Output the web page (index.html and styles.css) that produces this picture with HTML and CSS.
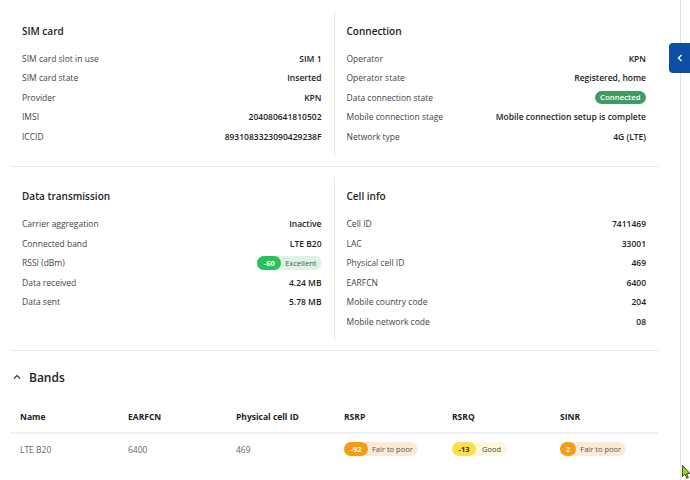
FILE: index.html
```html
<!DOCTYPE html>
<html>
<head>
<meta charset="utf-8">
<link rel="stylesheet" href="styles.css">
</head>
<body>
<div class="page">
  <main class="main">
    <section class="section">
      <div class="col">
        <h2 class="title">SIM card</h2>
        <div class="row"><span class="label">SIM card slot in use</span><span class="value">SIM 1</span></div>
        <div class="row"><span class="label">SIM card state</span><span class="value">Inserted</span></div>
        <div class="row"><span class="label">Provider</span><span class="value">KPN</span></div>
        <div class="row"><span class="label">IMSI</span><span class="value">204080641810502</span></div>
        <div class="row"><span class="label">ICCID</span><span class="value">8931083323090429238F</span></div>
      </div>
      <div class="col col-right">
        <h2 class="title">Connection</h2>
        <div class="row"><span class="label">Operator</span><span class="value">KPN</span></div>
        <div class="row"><span class="label">Operator state</span><span class="value">Registered, home</span></div>
        <div class="row"><span class="label">Data connection state</span><span class="status">Connected</span></div>
        <div class="row"><span class="label">Mobile connection stage</span><span class="value">Mobile connection setup is complete</span></div>
        <div class="row"><span class="label">Network type</span><span class="value">4G (LTE)</span></div>
      </div>
    </section>
    <section class="section section-2">
      <div class="col">
        <h2 class="title">Data transmission</h2>
        <div class="row"><span class="label">Carrier aggregation</span><span class="value">Inactive</span></div>
        <div class="row"><span class="label">Connected band</span><span class="value">LTE B20</span></div>
        <div class="row"><span class="label">RSSI (dBm)</span><span class="badge badge-green"><span class="num">-60</span><span class="txt">Excellent</span></span></div>
        <div class="row"><span class="label">Data received</span><span class="value">4.24 MB</span></div>
        <div class="row"><span class="label">Data sent</span><span class="value">5.78 MB</span></div>
      </div>
      <div class="col col-right">
        <h2 class="title">Cell info</h2>
        <div class="row"><span class="label">Cell ID</span><span class="value">7411469</span></div>
        <div class="row"><span class="label">LAC</span><span class="value">33001</span></div>
        <div class="row"><span class="label">Physical cell ID</span><span class="value">469</span></div>
        <div class="row"><span class="label">EARFCN</span><span class="value">6400</span></div>
        <div class="row"><span class="label">Mobile country code</span><span class="value">204</span></div>
        <div class="row"><span class="label">Mobile network code</span><span class="value">08</span></div>
      </div>
    </section>
    <section class="bands">
      <h2 class="bands-title">
        <svg class="chev-up" width="8" height="6" viewBox="0 0 8 6"><polyline points="1,4.5 4,1.5 7,4.5" fill="none" stroke="#333" stroke-width="1.1"/></svg>
        Bands
      </h2>
      <div class="table">
        <div class="thead">
          <span>Name</span><span>EARFCN</span><span>Physical cell ID</span><span>RSRP</span><span>RSRQ</span><span>SINR</span>
        </div>
        <div class="trow">
          <span>LTE B20</span><span>6400</span><span>469</span>
          <span><span class="badge badge-orange"><span class="num">-92</span><span class="txt">Fair to poor</span></span></span>
          <span><span class="badge badge-yellow"><span class="num">-13</span><span class="txt">Good</span></span></span>
          <span><span class="badge badge-orange"><span class="num num-sm">2</span><span class="txt">Fair to poor</span></span></span>
        </div>
      </div>
    </section>
  </main>
  <aside class="side">
    <button class="toggle">
      <svg width="6" height="8" viewBox="0 0 6 8"><polyline points="4.5,1 1.5,4 4.5,7" fill="none" stroke="#fff" stroke-width="1.4"/></svg>
    </button>
  </aside>
  <svg class="cursor" width="9" height="14" viewBox="0 0 9 14"><path d="M0.5 0.5 L0.5 11.5 L3 9.2 L4.8 13.2 L6.4 12.5 L4.7 8.6 L8 8.6 Z" fill="#8fdc2c" stroke="#1a2a00" stroke-width="0.8"/></svg>
</div>
</body>
</html>
```

FILE: styles.css
```css
* { box-sizing: border-box; }
html, body { margin: 0; padding: 0; background: #fff; }
body {
  font-family: "Open Sans", "Noto Sans", sans-serif;
  color: #222;
  width: 690px;
  height: 480px;
  overflow: hidden;
}
.page {
  position: relative;
  display: flex;
  height: 480px;
}
.main {
  width: 648px;
  margin-left: 10px;
}
.section {
  display: flex;
  padding: 12px 0 10px;
  border-bottom: 1px solid #e7ebf1;
}
.col {
  flex: 1;
  padding: 10.5px 12px 10px;
}
.section-2 { padding: 10px 0 10px; }
.section-2 .col { padding: 11px 12px 9px; }
.col-right {
  border-left: 1px solid #e9e9e9;
}
.title {
  margin: 0 0 10px;
  font-size: 10px;
  line-height: 16px;
  font-weight: 600;
  color: #222;
}
.row {
  display: flex;
  justify-content: space-between;
  align-items: center;
  height: 19.5px;
  font-size: 8.5px;
}
.label { color: #444; }
.value { font-weight: 600; color: #222; }
.status {
  background: #3f9a63;
  color: #fff;
  font-weight: 600;
  font-size: 7.8px;
  line-height: 13px;
  height: 13px;
  padding: 0 5.5px;
  border-radius: 7px;
}
.badge {
  display: inline-flex;
  align-items: center;
  height: 14px;
  border-radius: 7px;
  font-size: 7.5px;
  line-height: 14px;
}
.badge .num {
  color: #fff;
  font-weight: 700;
  padding: 0 6.5px;
  border-radius: 7px;
  height: 14px;
}
.badge .num-sm { padding: 0 6px; }
.badge .txt {
  padding: 0 5px 0 4px;
  color: #555;
}
.badge-green { background: #dcf4e2; }
.badge-green .num { background: #27c15a; }
.badge-orange { background: #fdead4; }
.badge-orange .num { background: #f59c10; }
.badge-yellow { background: #fef9dc; }
.badge-yellow .num { background: #fde047; color: #333; }
.badge-yellow .txt { color: #444; padding-right: 7px; padding-left: 6px; }
.bands {
  padding-top: 19px;
}
.bands-title {
  display: flex;
  align-items: center;
  gap: 8px;
  margin: 0 0 14px 3px;
  font-size: 12px;
  line-height: 16px;
  font-weight: 600;
  color: #222;
}
.chev-up { display: block; margin-top: -2px; }
.table { width: 648px; }
.thead, .trow {
  display: grid;
  grid-template-columns: repeat(6, 108px);
  padding-left: 10px;
  align-items: center;
  font-size: 8.5px;
}
.thead {
  height: 34px;
  font-weight: 700;
  color: #222;
  border-bottom: 2px solid #eef2f8;
}
.trow {
  height: 30px;
  color: #666;
}
.side {
  position: relative;
  flex: 1;
  border-left: 1px solid #e3e3e3;
  margin-left: 22px;
}
.toggle {
  position: absolute;
  top: 43px;
  right: 0;
  left: -12px;
  height: 30px;
  border: none;
  padding: 0;
  border-radius: 4px 0 0 4px;
  background: #0c4ea3;
  display: flex;
  align-items: center;
  justify-content: center;
}
.cursor {
  position: absolute;
  left: 682px;
  top: 465px;
}
```
